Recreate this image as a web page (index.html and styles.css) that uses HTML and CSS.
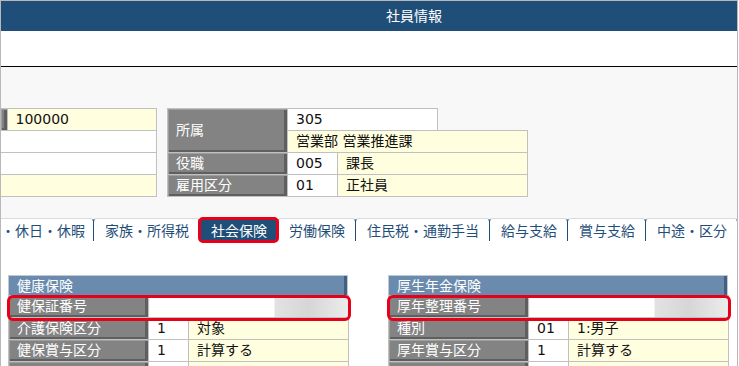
FILE: index.html
```html
<!DOCTYPE html>
<html lang="ja">
<head>
  <meta charset="UTF-8">
  <title>社員情報</title>
  <link rel="stylesheet" href="styles.css">
</head>
<body>
  <div class="screen">
    <div class="titlebar">社員情報</div>
    <div class="toolbar"></div>

    <!-- 基本情報 -->
    <div class="summary">
      <table class="grid grid-left">
        <tr><td class="label"></td><td class="fill">100000</td></tr>
        <tr><td class="plain" colspan="2"></td></tr>
        <tr><td class="plain" colspan="2"></td></tr>
        <tr><td class="fill" colspan="2"></td></tr>
      </table>

      <table class="grid grid-right">
        <colgroup>
          <col style="width:120px"><col style="width:50px"><col style="width:100px"><col style="width:90px">
        </colgroup>
        <tr>
          <td class="label" rowspan="2">所属</td>
          <td class="plain" colspan="2">305</td>
          <td class="empty"></td>
        </tr>
        <tr><td class="fill" colspan="3">営業部 営業推進課</td></tr>
        <tr><td class="label">役職</td><td class="plain">005</td><td class="fill" colspan="2">課長</td></tr>
        <tr><td class="label">雇用区分</td><td class="plain">01</td><td class="fill" colspan="2">正社員</td></tr>
      </table>
    </div>

    <!-- タブ -->
    <ul class="tabs">
      <li class="tab tab-cut">・休日・休暇</li>
      <li class="tab">家族・所得税</li>
      <li class="tab tab-active">社会保険</li>
      <li class="tab">労働保険</li>
      <li class="tab">住民税・通勤手当</li>
      <li class="tab">給与支給</li>
      <li class="tab">賞与支給</li>
      <li class="tab">中途・区分</li>
    </ul>

    <div class="tab-body">
      <section class="panel">
        <div class="panel-head">健康保険</div>
        <table class="grid sheet">
          <colgroup><col style="width:140px"><col style="width:40px"><col style="width:160px"></colgroup>
          <tr><td class="label">健保証番号</td><td class="plain masked" colspan="2"></td></tr>
          <tr><td class="label">介護保険区分</td><td class="plain">1</td><td class="fill">対象</td></tr>
          <tr><td class="label">健保賞与区分</td><td class="plain">1</td><td class="fill">計算する</td></tr>
          <tr><td class="label"></td><td class="plain"></td><td class="fill"></td></tr>
        </table>
        <div class="focus-ring"></div>
      </section>

      <section class="panel">
        <div class="panel-head">厚生年金保険</div>
        <table class="grid sheet">
          <colgroup><col style="width:140px"><col style="width:40px"><col style="width:160px"></colgroup>
          <tr><td class="label">厚年整理番号</td><td class="plain masked" colspan="2"></td></tr>
          <tr><td class="label">種別</td><td class="plain">01</td><td class="fill">1:男子</td></tr>
          <tr><td class="label">厚年賞与区分</td><td class="plain">1</td><td class="fill">計算する</td></tr>
          <tr><td class="label"></td><td class="plain"></td><td class="fill"></td></tr>
        </table>
        <div class="focus-ring"></div>
      </section>
    </div>
  </div>
</body>
</html>
```

FILE: styles.css
```css
/* 社員情報 画面 */
* {
  box-sizing: border-box;
}

body {
  margin: 0;
  background: #fff;
  font-family: "DejaVu Sans", "Noto Sans CJK JP", sans-serif;
  font-size: 14px;
  color: #111;
}

.screen {
  width: 738px;
  height: 366px;
  border: 1px solid #b8b8b8;
  border-bottom: none;
  overflow: hidden;
  background: #fff;
}

.titlebar {
  height: 30px;
  line-height: 28px;
  padding-left: 385px;
  background: #1f4f79;
  color: #fff;
  font-family: "Noto Sans CJK JP", sans-serif;
}

.toolbar {
  height: 36px;
  background: #fff;
  border-bottom: 1px solid #000;
}

/* 基本情報テーブル */
.summary {
  display: flex;
  align-items: flex-start;
  gap: 10px;
  padding: 41px 0 21px;
  background: #f8f8f8;
}

.grid {
  border-collapse: collapse;
  table-layout: fixed;
}

.grid td {
  border: 1px solid #c0c0c0;
  padding: 0 8px;
  line-height: 21px;
  height: 22px;
  white-space: nowrap;
  overflow: hidden;
}

.grid td.label {
  background: #838383;
  color: #fff;
  box-shadow: inset 1px 1px 0 #9d9d9d, inset -3px -2px 0 #5f5f5f;
}

.grid td.fill {
  background: #ffffe0;
}

.grid td.plain {
  background: #fff;
}

.grid td.empty {
  border: none;
  background: transparent;
}

.grid-left {
  width: 156px;
}

.grid-left td.label {
  width: 6px;
  padding: 0;
  border-left: none;
}

.grid-left td {
  border-left: none;
}

.grid-right {
  width: 361px;
}

/* タブ */
.tabs {
  display: flex;
  margin: 0;
  padding: 0;
  list-style: none;
  background: #f8f8f8;
  height: 23px;
}

.tab {
  padding: 0 10px 0 11px;
  line-height: 22px;
  margin-left: -1px;
  color: #1f4f79;
  background: #fff;
  border: 1px solid #1f4f79;
  border-top-color: #d4dce5;
  border-bottom: none;
  border-radius: 4px 4px 0 0;
  white-space: nowrap;
  font-family: "Noto Sans CJK JP", sans-serif;
}

.tab-cut {
  margin-left: 0;
  padding: 0 8px 0 0;
  border-left: none;
  border-radius: 0 4px 0 0;
}

.tab-active {
  position: relative;
  background: #1f4f79;
  color: #fff;
}

.tab-active::after {
  content: "";
  position: absolute;
  left: -2px;
  right: -2px;
  top: -2px;
  bottom: -2px;
  border: 3px solid #e6001a;
  border-radius: 5px;
}

/* 保険パネル */
.tab-body {
  display: flex;
  gap: 40px;
  padding: 34px 0 0 7px;
  background: #fff;
  height: 130px;
}

.panel {
  position: relative;
  width: 340px;
}

.panel-head {
  height: 20px;
  line-height: 20px;
  padding-left: 8px;
  background: #6a8bad;
  color: #fff;
  border: 1px solid #c0c8d0;
  border-bottom: none;
  box-shadow: inset -3px 0 0 #42607f;
}

.sheet {
  width: 340px;
}

.sheet td.masked {
  background: linear-gradient(to right, #fff 63%, #e2e2e2 63%, #d6d6d6 80%, #ececec 100%);
}

.focus-ring {
  position: absolute;
  left: -1px;
  top: 20px;
  width: 344px;
  height: 26px;
  border: 3px solid #e6001a;
  border-radius: 6px;
}
```
